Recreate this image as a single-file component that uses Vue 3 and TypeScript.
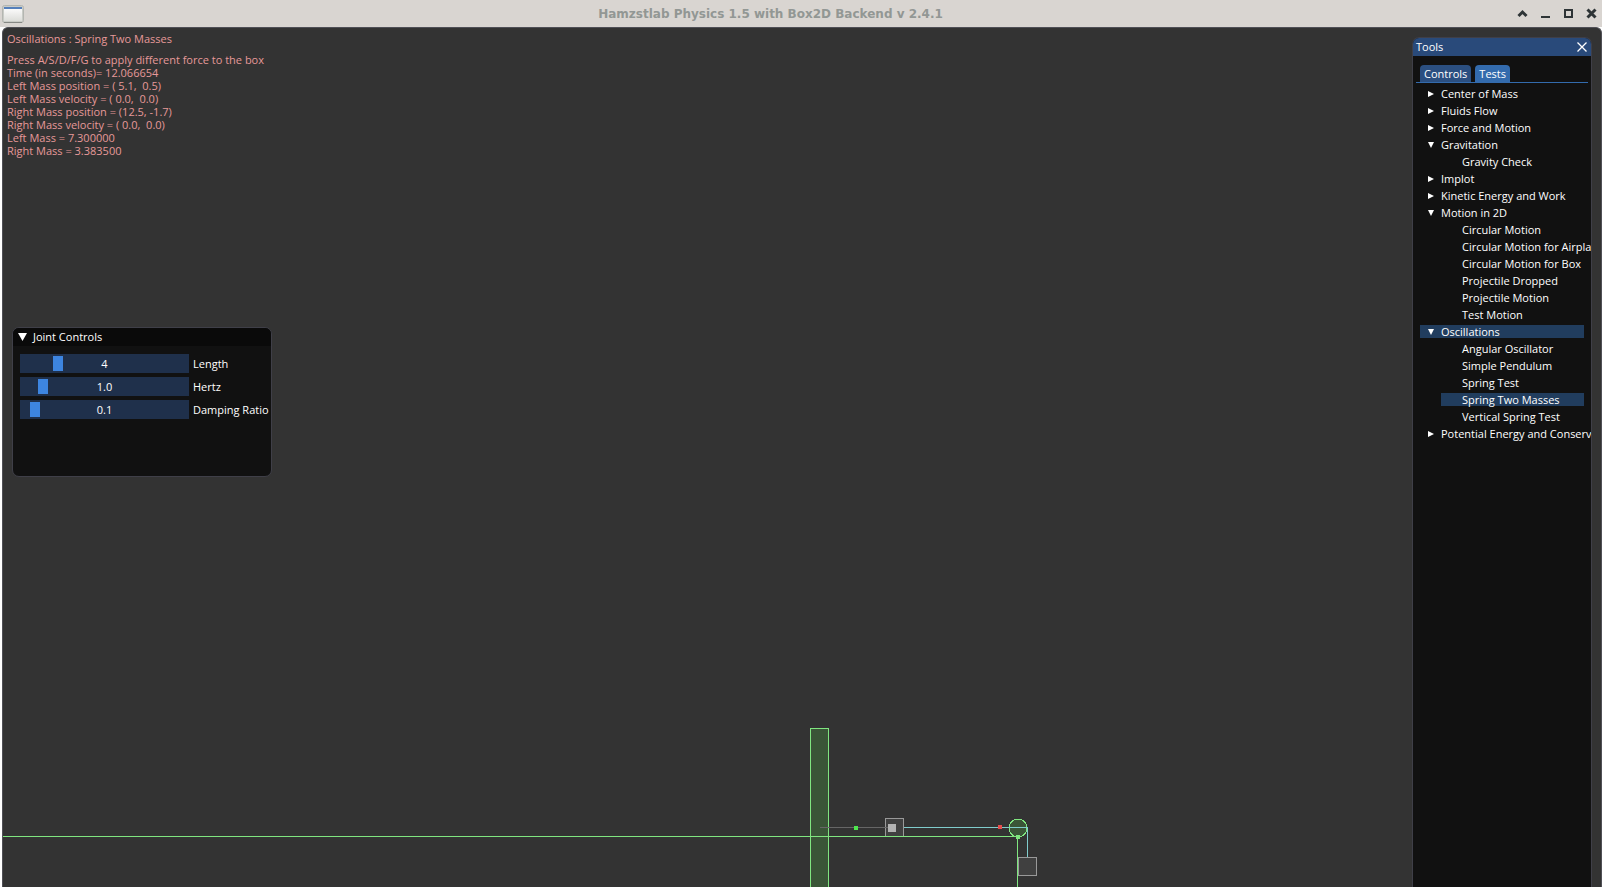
<script setup lang="ts">
import { computed, ref } from 'vue'

interface Slider {
  id: string
  label: string
  max: number
  step: number
  digits: number
  value: number
}

interface Category {
  name: string
  open: boolean
  tests: string[]
}

const sliders = ref<Slider[]>([
  { id: 'length', label: 'Length', max: 20, step: 1, digits: 0, value: 4 },
  { id: 'hertz', label: 'Hertz', max: 10, step: 0.1, digits: 1, value: 1 },
  { id: 'damping', label: 'Damping Ratio', max: 2, step: 0.1, digits: 1, value: 0.1 },
])

const categories = ref<Category[]>([
  { name: 'Center of Mass', open: false, tests: [] },
  { name: 'Fluids Flow', open: false, tests: [] },
  { name: 'Force and Motion', open: false, tests: [] },
  { name: 'Gravitation', open: true, tests: ['Gravity Check'] },
  { name: 'Implot', open: false, tests: [] },
  { name: 'Kinetic Energy and Work', open: false, tests: [] },
  {
    name: 'Motion in 2D',
    open: true,
    tests: [
      'Circular Motion',
      'Circular Motion for Airpla',
      'Circular Motion for Box',
      'Projectile Dropped',
      'Projectile Motion',
      'Test Motion',
    ],
  },
  {
    name: 'Oscillations',
    open: true,
    tests: [
      'Angular Oscillator',
      'Simple Pendulum',
      'Spring Test',
      'Spring Two Masses',
      'Vertical Spring Test',
    ],
  },
  { name: 'Potential Energy and Conserv', open: false, tests: [] },
])

const selected = ref('Spring Two Masses')
const tab = ref('Tests')
const jointOpen = ref(true)
const toolsOpen = ref(true)

const selectedCategory = computed(
  () => categories.value.find((c) => c.tests.includes(selected.value))?.name ?? '',
)

const readout = [
  'Press A/S/D/F/G to apply different force to the box',
  'Time (in seconds)= 12.066654',
  'Left Mass position = ( 5.1,  0.5)',
  'Left Mass velocity = ( 0.0,  0.0)',
  'Right Mass position = (12.5, -1.7)',
  'Right Mass velocity = ( 0.0,  0.0)',
  'Left Mass = 7.300000',
  'Right Mass = 3.383500',
]
</script>

<template>
  <div class="window">
    <header class="titlebar">
      <svg class="app-icon" width="22" height="18" viewBox="0 0 22 18" aria-hidden="true">
        <defs>
          <linearGradient id="page" x1="0" y1="0" x2="0" y2="1">
            <stop offset="0" stop-color="#ffffff" />
            <stop offset="1" stop-color="#dcddd9" />
          </linearGradient>
        </defs>
        <rect x="0.5" y="0.5" width="21" height="17" rx="2" fill="#c9cbc6" stroke="#b4b6b1" />
        <rect x="2" y="2" width="18" height="14" fill="url(#page)" />
        <rect x="2" y="2" width="18" height="2" fill="#5580bb" />
        <rect x="2" y="17" width="18" height="1" fill="#868884" />
      </svg>
      <h1 class="title">Hamzstlab Physics 1.5 with Box2D Backend v 2.4.1</h1>
      <div class="window-buttons">
        <button type="button" aria-label="Shade">
          <svg width="11" height="11" viewBox="0 0 11 11"><path d="M1.5 8 5.5 4 9.5 8" class="thick" /></svg>
        </button>
        <button type="button" aria-label="Minimize">
          <svg width="11" height="11" viewBox="0 0 11 11"><path d="M1 9H10" /></svg>
        </button>
        <button type="button" aria-label="Maximize">
          <svg width="11" height="11" viewBox="0 0 11 11"><path d="M2 2H9V9H2Z" /></svg>
        </button>
        <button type="button" aria-label="Close">
          <svg width="11" height="11" viewBox="0 0 11 11"><path d="M1.5 1.5 9.5 9.5M9.5 1.5 1.5 9.5" class="thick" /></svg>
        </button>
      </div>
    </header>

    <main class="viewport">
      <svg class="scene" viewBox="0 0 1598 859" preserveAspectRatio="xMidYMax slice" shape-rendering="crispEdges" aria-label="Two masses joined by a spring and a pulley">
        <g class="static-body">
          <rect x="807.5" y="700.5" width="18" height="170" />
          <circle cx="1015" cy="800" r="9" />
          <path d="M0 808.5H1014.5V859" fill="none" />
        </g>
        <g class="sleeping-body">
          <rect x="882.5" y="790.5" width="18" height="18" />
          <rect x="1015.5" y="829.5" width="18" height="18" />
        </g>
        <path class="ground-line" d="M0 808.5H1014.5" />
        <path class="spring" d="M817 799.5H888" />
        <path class="rope" d="M901 799.5H1024.5V829" />
        <rect x="885" y="796" width="8" height="8" fill="#b3b3b3" />
        <rect x="851" y="798" width="4" height="4" fill="#4de64d" />
        <rect x="995" y="797" width="4" height="4" fill="#e64d4d" />
        <rect x="1013" y="807" width="4" height="4" fill="#80e680" />
      </svg>

      <section class="info">
        <p class="test-name">Oscillations : Spring Two Masses</p>
        <p v-for="line in readout" :key="line">{{ line }}</p>
      </section>

      <section class="panel joint">
        <button type="button" class="joint-title" :aria-expanded="jointOpen" @click="jointOpen = !jointOpen">
          <svg width="9" height="8" viewBox="0 0 9 8" aria-hidden="true"><path d="M0 0H9L4.5 8Z" fill="#fff" /></svg>
          Joint Controls
        </button>
        <div v-if="jointOpen" class="joint-body">
          <div v-for="s in sliders" :key="s.id" class="slider-row">
            <div class="slider">
              <input :id="s.id" v-model.number="s.value" type="range" min="0" :max="s.max" :step="s.step" />
              <output :for="s.id">{{ s.value.toFixed(s.digits) }}</output>
            </div>
            <label :for="s.id">{{ s.label }}</label>
          </div>
        </div>
      </section>

      <aside v-if="toolsOpen" class="panel tools">
        <header class="tools-title">
          <h2>Tools</h2>
          <button type="button" aria-label="Close tools" @click="toolsOpen = false">
            <svg width="10" height="10" viewBox="0 0 10 10"><path d="M0.5 0.5 9.5 9.5M9.5 0.5 0.5 9.5" stroke="#fff" stroke-width="1.3" /></svg>
          </button>
        </header>
        <div class="tools-body">
          <div class="tabs" role="tablist">
            <button
              v-for="t in ['Controls', 'Tests']"
              :key="t"
              type="button"
              role="tab"
              :aria-selected="tab === t"
              :class="{ active: tab === t }"
              @click="tab = t"
            >{{ t }}</button>
          </div>
          <ul v-if="tab === 'Tests'" class="tree">
            <li v-for="c in categories" :key="c.name">
              <button
                type="button"
                class="node"
                :class="{ selected: c.name === selectedCategory }"
                :aria-expanded="c.open"
                @click="c.open = !c.open"
              >
                <svg width="6" height="6" viewBox="0 0 6 6" aria-hidden="true">
                  <path :d="c.open ? 'M0 0H6L3 6Z' : 'M0 0L6 3L0 6Z'" fill="#fff" />
                </svg>
                {{ c.name }}
              </button>
              <ul v-if="c.open && c.tests.length" class="leaves">
                <li v-for="t in c.tests" :key="t">
                  <button type="button" class="leaf" :class="{ selected: t === selected }" @click="selected = t">{{ t }}</button>
                </li>
              </ul>
            </li>
          </ul>
        </div>
      </aside>
    </main>
  </div>
</template>

<style>
body {
  background: #fff;
}
</style>

<style scoped>
* {
  box-sizing: border-box;
}

button {
  margin: 0;
  padding: 0;
  border: 0;
  background: none;
  color: inherit;
  font: inherit;
  text-align: left;
}

h1,
h2,
p,
ul {
  margin: 0;
  padding: 0;
  list-style: none;
  font: inherit;
}

.window {
  display: flex;
  flex-direction: column;
  height: 100vh;
  overflow: hidden;
  font: 11px/13px "Open Sans", "Noto Sans", sans-serif;
  color: #fff;
}

.titlebar {
  display: flex;
  align-items: center;
  flex: none;
  height: 27px;
  padding: 0 5px 0 2px;
  background: #d9d5d1;
}

.title {
  flex: 1;
  text-align: center;
  font: bold 12px/16px "DejaVu Sans", sans-serif;
  color: #929794;
}

.window-buttons {
  display: flex;
  gap: 12px;
}

.window-buttons svg {
  display: block;
  fill: none;
  stroke: #2e3436;
  stroke-width: 2;
}

.window-buttons .thick {
  stroke-width: 3;
}

.viewport {
  position: relative;
  flex: 1;
  min-height: 0;
  margin-left: 2px;
  border: 1px solid #505056;
  border-bottom: 0;
  border-radius: 6px 6px 0 0;
  background: #333;
  overflow: hidden;
}

.scene {
  position: absolute;
  inset: 0;
  width: 100%;
  height: 100%;
}

.static-body {
  fill: #3a5537;
  stroke: #80e680;
}

.sleeping-body {
  fill: #404040;
  stroke: #999;
}

.ground-line {
  stroke: #80e680;
}

.spring {
  stroke: #666;
}

.rope {
  fill: none;
  stroke: #80cccc;
}

.info {
  position: relative;
  padding: 4px;
  color: #e69999;
  white-space: pre;
}

.test-name {
  margin-bottom: 8px;
}

.panel {
  position: absolute;
  border: 1px solid #3f3f48;
  border-radius: 7px;
  background: #111;
  overflow: hidden;
}

.joint {
  top: 299px;
  left: 9px;
  width: 260px;
  height: 150px;
}

.joint-title {
  display: flex;
  align-items: center;
  gap: 6px;
  width: 100%;
  height: 18px;
  padding: 0 5px 1px;
  background: #0a0a0a;
}

.joint-body {
  display: flex;
  flex-direction: column;
  gap: 4px;
  padding: 8px 7px;
}

.slider-row {
  display: flex;
  align-items: center;
  gap: 4px;
  white-space: nowrap;
}

.slider {
  position: relative;
  flex: none;
  width: 169px;
  height: 19px;
}

.slider input {
  display: block;
  appearance: none;
  width: 100%;
  height: 100%;
  margin: 0;
  padding: 0 2px;
  background: #1f304b;
}

.slider input::-webkit-slider-thumb {
  appearance: none;
  width: 10px;
  height: 15px;
  background: #3d85e0;
}

.slider output {
  position: absolute;
  inset: 3px 0;
  text-align: center;
  pointer-events: none;
}

.tools {
  top: 9px;
  right: 9px;
  bottom: 0;
  width: 180px;
  border-bottom: 0;
  border-radius: 7px 7px 0 0;
}

.tools-title {
  display: flex;
  align-items: center;
  justify-content: space-between;
  height: 18px;
  padding: 0 4px 1px 3px;
  background: #294a7a;
}

.tools-title svg {
  display: block;
}

.tools-body {
  padding: 9px 3px;
}

.tabs {
  display: flex;
  gap: 4px;
  padding: 0 4px;
  border-bottom: 1px solid #336bad;
}

.tabs button {
  height: 17px;
  padding: 2px 4px;
  border-radius: 4px 4px 0 0;
  background: #2b4f80;
}

.tabs .active {
  background: #336bad;
}

.tree {
  padding: 4px 0 0 4px;
  white-space: nowrap;
}

.tree li {
  margin-bottom: 4px;
}

.node,
.leaf {
  display: flex;
  align-items: center;
  width: calc(100% - 4px);
  height: 13px;
}

.node {
  gap: 7px;
  padding-left: 8px;
}

.node svg {
  flex: none;
}

.leaves {
  padding: 4px 0 0 21px;
}

.tree .leaves li:last-child {
  margin-bottom: 0;
}

.leaf {
  padding-left: 21px;
}

.selected {
  background: #213d5e;
}
</style>
